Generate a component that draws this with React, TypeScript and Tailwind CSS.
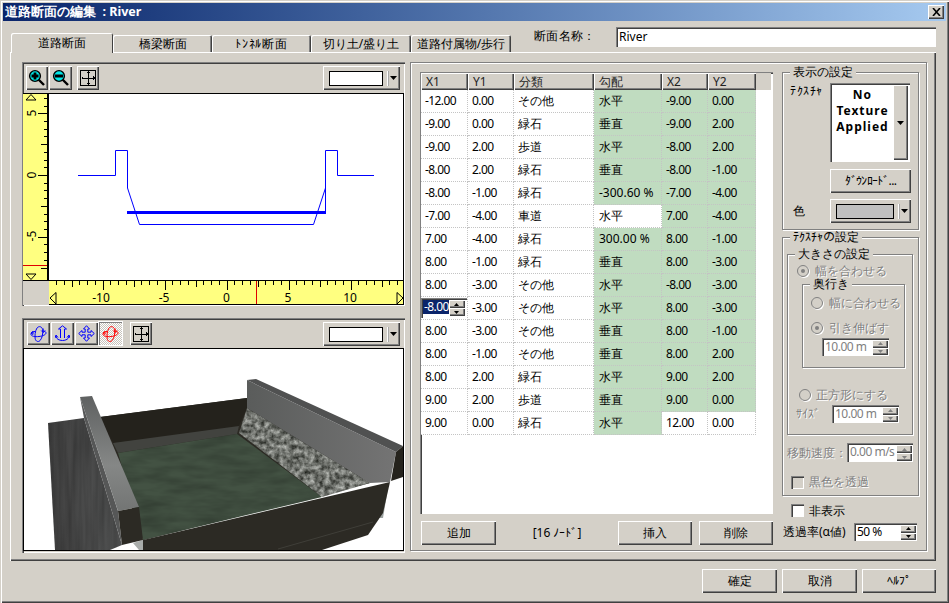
import type { ReactNode } from 'react'

const raised = 'bg-[#d4d0c8] shadow-[inset_1px_1px_0_#fff,inset_-1px_-1px_0_#404040,inset_-2px_-2px_0_#808080]'
const sunken = 'shadow-[inset_1px_1px_0_#808080,inset_2px_2px_0_#404040,inset_-1px_-1px_0_#fff]'
const groove = 'border border-[#808080] shadow-[inset_1px_1px_0_#fff,1px_1px_0_#fff]'
const off = 'text-[#808080] [text-shadow:1px_1px_0_#fff]'

type Row = [string, string, string, string, string, string]

const rows: Row[] = [
  ['-12.00', '0.00', 'その他', '水平', '-9.00', '0.00'],
  ['-9.00', '0.00', '緑石', '垂直', '-9.00', '2.00'],
  ['-9.00', '2.00', '歩道', '水平', '-8.00', '2.00'],
  ['-8.00', '2.00', '緑石', '垂直', '-8.00', '-1.00'],
  ['-8.00', '-1.00', '緑石', '-300.60 %', '-7.00', '-4.00'],
  ['-7.00', '-4.00', '車道', '水平', '7.00', '-4.00'],
  ['7.00', '-4.00', '緑石', '300.00 %', '8.00', '-1.00'],
  ['8.00', '-1.00', '緑石', '垂直', '8.00', '-3.00'],
  ['8.00', '-3.00', 'その他', '水平', '-8.00', '-3.00'],
  ['-8.00', '-3.00', 'その他', '水平', '8.00', '-3.00'],
  ['8.00', '-3.00', 'その他', '垂直', '8.00', '-1.00'],
  ['8.00', '-1.00', 'その他', '垂直', '8.00', '2.00'],
  ['8.00', '2.00', '緑石', '水平', '9.00', '2.00'],
  ['9.00', '2.00', '歩道', '垂直', '9.00', '0.00'],
  ['9.00', '0.00', '緑石', '水平', '12.00', '0.00'],
]

function Btn({ children, className = '' }: { children?: ReactNode; className?: string }) {
  return <div className={`flex items-center justify-center ${raised} ${className}`}>{children}</div>
}

function Down({ className = '' }: { className?: string }) {
  return (
    <svg width="7" height="4" viewBox="0 0 7 4" className={className}>
      <path d="M0 0h7L3.500 4z" fill="#000" />
    </svg>
  )
}

function Combo({ color = 'bg-white', className = '' }: { color?: string; className?: string }) {
  return (
    <div className={`flex items-center ${raised} ${className}`}>
      <div className={`ml-[6px] h-[15px] flex-1 border border-black ${color}`} />
      <div className="ml-[4px] h-[15px] w-[2px] border-l border-white bg-[#a8a8a8]" />
      <Down className="ml-[1px] mr-[3px]" />
    </div>
  )
}

function Spin({ value, disabled = false, className = '' }: { value: string; disabled?: boolean; className?: string }) {
  return (
    <div className={`flex bg-white p-[2px] pb-[1px] pr-[1px] ${sunken} ${className}`}>
      <span className={`flex-1 whitespace-nowrap pl-[1px] text-[12px] leading-[14px] tracking-[-0.5px] ${disabled ? 'text-[#808080]' : 'text-black'}`}>
        {value}
      </span>
      <div className="flex w-[16px] flex-col">
        <Btn className="flex-1"><svg width="5" height="3" viewBox="0 0 5 3"><path d="M2.500 0L5 3H0z" fill={disabled ? '#808080' : '#000'} /></svg></Btn>
        <Btn className="flex-1"><svg width="5" height="3" viewBox="0 0 5 3"><path d="M0 0h5L2.500 3z" fill={disabled ? '#808080' : '#000'} /></svg></Btn>
      </div>
    </div>
  )
}

function Group({ title, className = '', children }: { title: string; className?: string; children?: ReactNode }) {
  return (
    <div className={`relative ${groove} ${className}`}>
      <span className="absolute -top-[7px] left-[7px] bg-[#d4d0c8] px-[3px] text-[12px] leading-[12px] text-black [text-shadow:none]">{title}</span>
      {children}
    </div>
  )
}

function Radio({ checked = false }: { checked?: boolean }) {
  return (
    <span className="flex h-[12px] w-[12px] items-center justify-center rounded-full border border-[#808080] bg-[#d4d0c8] shadow-[1px_1px_0_#fff]">
      {checked && <span className="h-[4px] w-[4px] rounded-full bg-[#808080]" />}
    </span>
  )
}

function Check({ disabled = false }: { disabled?: boolean }) {
  return <span className={`h-[13px] w-[13px] ${disabled ? 'bg-[#d4d0c8]' : 'bg-white'} ${sunken}`} />
}

function MagIcon({ minus = false }: { minus?: boolean }) {
  return (
    <svg width="18" height="18" viewBox="0 0 18 18">
      <path d="M10.500 10.500L16 16" stroke="#000" strokeWidth="2.400" />
      <circle cx="7" cy="7" r="5.400" fill="#00e8e8" stroke="#000" strokeWidth="1.400" />
      {minus ? (
        <rect x="3" y="5.500" width="8" height="3" fill="#000" />
      ) : (
        <path d="M3.500 5.600h2.100V3.500h2.800v2.100h2.100v2.800H8.400v2.100H5.600V8.400H3.500z" fill="#000" />
      )}
    </svg>
  )
}

function FitIcon() {
  return (
    <svg width="16" height="16" viewBox="0 0 16 16" fill="none" shapeRendering="crispEdges">
      <rect x="0.500" y="0.500" width="15" height="15" stroke="#000" />
      <path d="M8 2v12M2 8h12" stroke="#000" />
      <path d="M8 1l2 2H6zM8 15l-2-2h4zM1 8l2-2v4zM15 8l-2 2V6z" fill="#000" />
    </svg>
  )
}

function OrbitIcon({ color = '#0000ff' }: { color?: string }) {
  return (
    <svg width="17" height="18" viewBox="0 0 17 18" fill="none" stroke={color} strokeWidth="1">
      <path d="M7 3c2-2.400 5-1.500 5.600 1.600.6 3.200-.2 8.500-2.600 11-1.800 1.800-4.200.8-4.800-1.800C4.700 11.400 5 6 7 3z" />
      <path d="M5 6.500C2 6.500.8 8 1 9.500c.3 1.800 4 2.500 8 2 3.500-.4 7-1.800 7-3.500 0-1-1-1.800-2.500-2" />
      <path d="M13.200 3.500v4M11.200 5.500l2 2 2-2M1 8l2-1.500v3z" />
    </svg>
  )
}

function AnchorIcon() {
  return (
    <svg width="15" height="18" viewBox="0 0 15 18" fill="none" stroke="#0000ff" strokeWidth="1">
      <path d="M5.500 13V4H3.500L7.500 .8 11.500 4H9.500V13" />
      <path d="M1 11c0 6 13 6 13 0M0 13l1-3 2 2.500M15 13l-1-3-2 2.500" />
    </svg>
  )
}

function MoveIcon() {
  return (
    <svg width="17" height="17" viewBox="0 0 17 17" fill="none" stroke="#0000ff" strokeWidth="1">
      <path d="M8.500.7L11.500 4H9.800v3.200H13V5.500L16.300 8.500 13 11.500V9.800H9.800V13h1.700L8.500 16.300 5.500 13h1.700V9.800H4v1.700L.7 8.500 4 5.500v1.700h3.200V4H5.500z" />
    </svg>
  )
}

function SideRuler() {
  const ticks = Array.from({ length: 23 }, (_, i) => i - 10)
  return (
    <svg width="26" height="188" viewBox="23 93 26 188" className="bg-[#ffff80]">
      {ticks.map((k) => {
        const y = Math.round(175 + k * 7.720) + 0.500
        const x = k % 8 === 0 ? 38 : k % 4 === 0 ? 41 : 44
        return <path key={k} d={`M${x} ${y}H47`} stroke="#000" shapeRendering="crispEdges" />
      })}
      {[['5', 113], ['0', 175], ['-5', 236]].map(([t, y]) => (
        <text key={t} x="31" y={y} transform={`rotate(-90 31 ${y})`} textAnchor="middle" dominantBaseline="central" className="text-[12px]" fill="#000">
          {t}
        </text>
      ))}
      <path d="M31 94.500L36 100H26z" fill="none" stroke="#000" />
      <path d="M31 279.500L36 274H26z" fill="none" stroke="#000" />
      <path d="M23 265.500H48" stroke="#e00000" shapeRendering="crispEdges" />
      <path d="M23 93.500H48.500M47.500 93V281M23 280.500H48" stroke="#000" strokeWidth="1" shapeRendering="crispEdges" />
      <path d="M48.500 93V281" stroke="#000" shapeRendering="crispEdges" />
    </svg>
  )
}

function BottomRuler() {
  const ticks = Array.from({ length: 46 }, (_, i) => i - 23)
  return (
    <svg width="355" height="24" viewBox="49 281 355 24" className="bg-[#ffff80]">
      {ticks.map((k) => {
        const x = Math.round(226.500 + k * 7.750) + 0.500
        const y = k % 8 === 0 ? 290 : k % 4 === 0 ? 287 : 285
        return <path key={k} d={`M${x} 281V${y}`} stroke="#000" shapeRendering="crispEdges" />
      })}
      {[['-10', 101], ['-5', 164], ['0', 226.500], ['5', 288], ['10', 350]].map(([t, x]) => (
        <text key={t} x={x} y="302" textAnchor="middle" className="text-[12px]" fill="#000">
          {t}
        </text>
      ))}
      <path d="M50 298L56 292.500V304z" fill="none" stroke="#000" />
      <path d="M403 298L397 292.500V304z" fill="none" stroke="#000" />
      <path d="M256.500 281V305" stroke="#e00000" shapeRendering="crispEdges" />
      <path d="M49 304.500H404M403.500 281V305" stroke="#000" shapeRendering="crispEdges" />
    </svg>
  )
}

function SectionView() {
  return (
    <svg width="355" height="188" viewBox="49 93 355 188" className="bg-white">
      <path d="M49 93.500H404M403.500 93V281M49 280.500H404" stroke="#000" shapeRendering="crispEdges" />
      <path
        d="M78 175.500H115.500V150.500H127.500V188L139.500 224.500H313.500L325.500 188"
        fill="none"
        stroke="#0000ff"
      />
      <path d="M325.500 212V150.500H337.500V175.500H374" fill="none" stroke="#0000ff" />
      <path d="M127 212.500H326" stroke="#0000ff" strokeWidth="3" shapeRendering="crispEdges" />
    </svg>
  )
}

function Scene() {
  return (
    <svg width="379" height="201" viewBox="24 349 379 201" className="block bg-white">
      <defs>
        <filter id="stones" x="0" y="0" width="100%" height="100%" colorInterpolationFilters="sRGB">
          <feTurbulence type="fractalNoise" baseFrequency="0.2" numOctaves="3" seed="7" result="t" />
          <feColorMatrix in="t" values="0 0 0 .8 .04  0 0 0 .8 .05  0 0 0 .8 .03  0 0 0 0 1" />
          <feComposite in2="SourceAlpha" operator="in" />
        </filter>
        <filter id="water" x="0" y="0" width="100%" height="100%" colorInterpolationFilters="sRGB">
          <feTurbulence type="fractalNoise" baseFrequency="0.03 0.12" numOctaves="3" seed="3" />
          <feColorMatrix values="0 0 0 0 0  0 0 0 0 0  0 0 0 0 0  0 0 0 .35 -.1" />
          <feComposite in2="SourceAlpha" operator="in" result="n" />
          <feMerge>
            <feMergeNode in="SourceGraphic" />
            <feMergeNode in="n" />
          </feMerge>
        </filter>
        <filter id="streak" x="0" y="0" width="100%" height="100%" colorInterpolationFilters="sRGB">
          <feTurbulence type="fractalNoise" baseFrequency="0.22 0.015" numOctaves="2" seed="5" />
          <feColorMatrix values="0 0 0 0 0  0 0 0 0 0  0 0 0 0 0  0 0 0 .35 -.1" />
          <feComposite in2="SourceAlpha" operator="in" result="n" />
          <feMerge>
            <feMergeNode in="SourceGraphic" />
            <feMergeNode in="n" />
          </feMerge>
        </filter>
        <linearGradient id="wallR" x1="0" y1="0" x2="1" y2="0">
          <stop offset="0" stopColor="#5a5c5b" />
          <stop offset="1" stopColor="#747474" />
        </linearGradient>
        <linearGradient id="curb" x1="0" y1="0" x2="0" y2="1">
          <stop offset="0" stopColor="#5f6161" />
          <stop offset="0.6" stopColor="#858786" />
          <stop offset="1" stopColor="#737574" />
        </linearGradient>
        <linearGradient id="slab" x1="0" y1="0" x2="1" y2="0">
          <stop offset="0" stopColor="#414141" />
          <stop offset="1" stopColor="#525353" />
        </linearGradient>
      </defs>
      <path d="M133 543L143 540V550H139z" fill="#a9acaa" />
      <path d="M388 488L383 518H377z" fill="#9da3a1" />
      {/* dark base so no white seams show between the faces */}
      <path d="M100 417L247 398L370 483L143 540z" fill="#2c2a24" />
      <path d="M48 423L84 418L122 545L110 550H55z" fill="url(#slab)" filter="url(#streak)" />
      <path d="M100 417L247 398V408L238 428L113 443z" fill="#24221c" />
      <path d="M113 443L239 426L237 434L118 453z" fill="#42433f" />
      <path d="M118 453L237 434L322 497L143 540z" fill="#435243" filter="url(#water)" />
      <path d="M247 408L239 433L322 497L370 483z" fill="#777" filter="url(#stones)" />
      <path d="M247 380L247 408L370 483L390 482L396 452z" fill="url(#wallR)" />
      <path d="M247 380L256 379L403 446L396 452z" fill="#505151" />
      <path d="M396 452L403 446V477L391 481z" fill="#25231d" />
      <path d="M143 540L390 482L383 513L368 535L322 550H143z" fill="#2c2a24" />
      <path d="M278 549L373 522" stroke="#3f3e38" fill="none" />
      <path d="M80 397L118 511L122 545L84 418z" fill="#565757" />
      <path d="M80 397L92 396L139 507L118 511z" fill="url(#curb)" />
      <path d="M118 511L139 507L143 540L122 545z" fill="#2c2a24" />
    </svg>
  )
}

function Table() {
  const widths = ['w-[47px]', 'w-[46px]', 'w-[80px]', 'w-[68px]', 'w-[46px]', 'w-[48px]']
  const heads = ['X1', 'Y1', '分類', '勾配', 'X2', 'Y2']
  return (
    <div className={`h-[442px] w-[353px] bg-white pb-[2px] pl-[1px] pr-[2px] pt-[1px] ${sunken}`}>
      <div className="flex h-[17px] bg-[#d4d0c8]">
        {heads.map((h, i) => (
          <div key={h} className={`flex items-center pl-[5px] text-[12px] text-[#222] ${raised} ${widths[i]}`}>
            {h}
          </div>
        ))}
      </div>
      {rows.map((row, r) => (
        <div key={r} className="flex h-[23px]">
          {row.map((cell, c) => {
            // calculated cells are tinted, user-entered ones stay white
            const green = (c === 3 && r !== 5) || (c > 3 && r !== 14)
            const edit = r === 9 && c === 0
            return (
              <div
                key={c}
                className={`flex items-center overflow-hidden whitespace-nowrap border-b border-r border-dotted border-[#c4c4c4] text-[12px] text-black ${widths[c]} ${green ? 'bg-[#c0dcc0]' : 'bg-white'} ${edit ? 'pl-0' : c === 3 ? 'pl-[5px]' : 'pl-[4px]'} ${c === 2 || c === 3 ? '' : 'tracking-[-0.6px]'}`}
              >
                {edit ? <EditCell value={cell} /> : cell}
              </div>
            )
          })}
        </div>
      ))}
    </div>
  )
}

function EditCell({ value }: { value: string }) {
  return (
    <div className={`flex h-[20px] w-[46px] bg-white p-[2px] ${sunken}`}>
      <span className="h-[14px] bg-[#0a246a] pl-[1px] text-[12px] leading-[14px] text-white">{value}</span>
      <div className="flex flex-1 flex-col">
        <Btn className="flex-1"><svg width="5" height="3" viewBox="0 0 5 3"><path d="M2.500 0L5 3H0z" /></svg></Btn>
        <Btn className="flex-1"><svg width="5" height="3" viewBox="0 0 5 3"><path d="M0 0h5L2.500 3z" /></svg></Btn>
      </div>
    </div>
  )
}

function SettingsColumn() {
  const radioRow = `flex h-[14px] items-center text-[12px] leading-[12px] ${off}`
  return (
    <div className="ml-[9px] w-[137px] pt-[9px]">
      <Group title="表示の設定" className="h-[158px] pt-[10px]">
        <div className="flex">
          <span className="w-[47px] pl-[7px] pt-[1px] text-[12px] leading-[14px] tracking-[0.5px]">ﾃｸｽﾁｬ</span>
          <div className={`flex h-[79px] w-[80px] bg-white p-[2px] ${sunken}`}>
            <div className="flex-1 pt-[2px] text-center text-[12px] font-bold tracking-[1px] text-black">
              <div className="h-[16px] leading-[16px]">No</div>
              <div className="h-[16px] leading-[16px]">Texture</div>
              <div className="h-[16px] leading-[16px]">Applied</div>
            </div>
            <Btn className="w-[15px]"><Down /></Btn>
          </div>
        </div>
        <Btn className="ml-[47px] mt-[7px] h-[24px] w-[81px] text-[12px] tracking-[-0.7px]">ﾀﾞｳﾝﾛｰﾄﾞ...</Btn>
        <div className="mt-[6px] flex items-center">
          <span className="w-[47px] pl-[10px] text-[12px]">色</span>
          <Combo color="bg-[#c0c0c0]" className="h-[24px] w-[81px]" />
        </div>
      </Group>

      <Group title="ﾃｸｽﾁｬの設定" className="mt-[7px] h-[259px] pt-[16px]">
        <Group title="大きさの設定" className="ml-[4px] h-[181px] w-[126px] pt-[9px]">
          <div className={`${radioRow} gap-[6px] pl-[9px]`}>
            <Radio checked />
            幅を合わせる
          </div>
          <Group title="奥行き" className="ml-[14px] mt-[6px] h-[84px] w-[103px] pt-[11px]">
            <div className={`${radioRow} gap-[6px] pl-[8px]`}>
              <Radio />
              幅に合わせる
            </div>
            <div className={`${radioRow} mt-[11px] gap-[6px] pl-[8px]`}>
              <Radio checked />
              引き伸ばす
            </div>
            <Spin value="10.00 m" disabled className="ml-[19px] mt-[3px] h-[18px] w-[67px]" />
          </Group>
          <div className={`${radioRow} mt-[20px] gap-[5px] pl-[11px]`}>
            <Radio />
            正方形にする
          </div>
          <div className="mt-[3px] flex items-center pl-[8px]">
            <span className={`w-[36px] text-[12px] ${off}`}>ｻｲｽﾞ</span>
            <Spin value="10.00 m" disabled className="h-[18px] w-[67px]" />
          </div>
        </Group>
        <div className="mt-[8px] flex items-center pl-[4px]">
          <span className={`w-[60px] whitespace-nowrap text-[12px] ${off}`}>移動速度：</span>
          <Spin value="0.00 m/s" disabled className="h-[19px] w-[66px]" />
        </div>
        <div className={`mt-[11px] flex items-center gap-[5px] pl-[8px] text-[12px] ${off}`}>
          <Check disabled />
          黒色を透過
        </div>
      </Group>

      <div className="ml-[9px] mt-[8px] flex items-center gap-[5px] text-[12px] leading-[13px]">
        <Check />
        非表示
      </div>
      <div className="mt-[6px] flex items-center pl-[1px]">
        <span className="w-[71px] whitespace-nowrap text-[12px]">透過率(α値)</span>
        <Spin value="50 %" className="h-[18px] w-[63px]" />
      </div>
    </div>
  )
}

export default function App() {
  const tabs: [string, string][] = [
    ['橋梁断面', 'w-[99px]'],
    ['ﾄﾝﾈﾙ断面', 'w-[99px] tracking-[0.7px]'],
    ['切り土/盛り土', 'w-[100px]'],
    ['道路付属物/歩行', 'w-[100px]'],
  ]
  return (
    <div className="flex h-[603px] w-[949px] flex-col overflow-hidden bg-[#d4d0c8] px-[3px] pt-[3px] font-['Liberation_Sans','Noto_Sans_CJK_JP',sans-serif] text-black shadow-[inset_1px_1px_0_#d4d0c8,inset_2px_2px_0_#fff,inset_-1px_-1px_0_#404040,inset_-2px_-2px_0_#808080]">
      <div className="flex h-[18px] items-center justify-between bg-gradient-to-r from-[#0a246a] to-[#a6caf0] pl-[2px] pr-[2px]">
        <span className="whitespace-pre text-[12.5px] font-bold text-white">{'道路断面の編集  : River'}</span>
        <Btn className="h-[14px] w-[16px]">
          <svg width="9" height="8" viewBox="0 0 9 8">
            <path d="M1 0l7 8M8 0L1 8" stroke="#000" strokeWidth="1.600" />
          </svg>
        </Btn>
      </div>

      <div className="flex h-[31px] items-end pl-[8px]">
        <div className="z-10 -mb-px flex h-[20px] w-[102px] items-center justify-center rounded-t-[2px] bg-[#d4d0c8] pb-[1px] text-[12px] shadow-[inset_1px_1px_0_#fff,inset_-1px_0_0_#404040]">
          道路断面
        </div>
        {tabs.map(([t, w]) => (
          <div key={t} className={`flex h-[17px] items-center justify-center whitespace-nowrap rounded-t-[2px] text-[12px] shadow-[inset_1px_1px_0_#fff,inset_-1px_0_0_#404040,inset_-2px_0_0_#808080] ${w}`}>
            {t}
          </div>
        ))}
        <span className="mb-[7px] ml-[23px] w-[82px] whitespace-nowrap text-[12px] tracking-[0.3px]">断面名称：</span>
        <div className={`mb-[5px] flex h-[20px] w-[320px] items-center bg-white pl-[3px] text-[12px] ${sunken}`}>River</div>
      </div>

      <div className="ml-[7px] flex h-[509px] w-[926px] pl-[12px] pt-[10px] shadow-[inset_1px_1px_0_#fff,inset_-1px_-1px_0_#404040,inset_-2px_-2px_0_#808080]">
        <div className="flex w-[383px] flex-col gap-[12px]">
          <div className={`h-[244px] p-[1px] ${sunken}`}>
            <div className="flex h-[30px] pl-[3px] pr-[4px] pt-[3px]">
              <Btn className="h-[24px] w-[22px]"><MagIcon /></Btn>
              <Btn className="ml-[1px] h-[24px] w-[23px]"><MagIcon minus /></Btn>
              <Btn className="ml-[5px] h-[24px] w-[22px]"><FitIcon /></Btn>
              <Combo className="ml-auto h-[24px] w-[77px]" />
            </div>
            <div className="flex">
              <SideRuler />
              <SectionView />
            </div>
            <div className="flex">
              <div className="h-[24px] w-[26px] bg-[#d4d0c8]" />
              <BottomRuler />
            </div>
          </div>

          <div className={`h-[235px] p-[1px] ${sunken}`}>
            <div className="flex h-[29px] pl-[4px] pr-[4px] pt-[3px]">
              <Btn className="h-[23px] w-[23px]"><OrbitIcon /></Btn>
              <Btn className="ml-[1px] h-[23px] w-[23px]"><AnchorIcon /></Btn>
              <Btn className="ml-[1px] h-[23px] w-[23px]"><MoveIcon /></Btn>
              <div className="ml-[1px] flex h-[23px] w-[23px] items-center justify-center bg-[repeating-conic-gradient(#c8c4bc_0_25%,#fff_0_50%)] bg-[length:2px_2px] shadow-[inset_1px_1px_0_#808080,0_0_0_1px_#fff]">
                <OrbitIcon color="#ff0000" />
              </div>
              <Btn className="ml-[8px] h-[23px] w-[22px]"><FitIcon /></Btn>
              <Combo className="ml-auto h-[24px] w-[77px]" />
            </div>
            <div className="h-[203px] w-[381px] border border-black">
              <Scene />
            </div>
          </div>
        </div>

        <div className={`ml-[5px] flex h-[489px] w-[517px] pl-[9px] pt-[9px] ${groove}`}>
          <div className="w-[353px]">
            <Table />
            <div className="mt-[7px] flex items-center pl-[1px]">
              <Btn className="h-[24px] w-[75px] text-[12px]">追加</Btn>
              <span className="flex-1 text-center text-[12px]">[16 ﾉｰﾄﾞ]</span>
              <Btn className="h-[24px] w-[74px] text-[12px]">挿入</Btn>
              <Btn className="ml-[7px] h-[24px] w-[74px] text-[12px]">削除</Btn>
            </div>
          </div>
          <div className="-mt-[9px]">
            <SettingsColumn />
          </div>
        </div>
      </div>

      <div className="mt-[8px] flex justify-end gap-[5px] pr-[10px]">
        <Btn className="h-[24px] w-[75px] text-[12px]">確定</Btn>
        <Btn className="h-[24px] w-[75px] text-[12px]">取消</Btn>
        <Btn className="h-[24px] w-[74px] text-[12px]">ﾍﾙﾌﾟ</Btn>
      </div>
    </div>
  )
}
